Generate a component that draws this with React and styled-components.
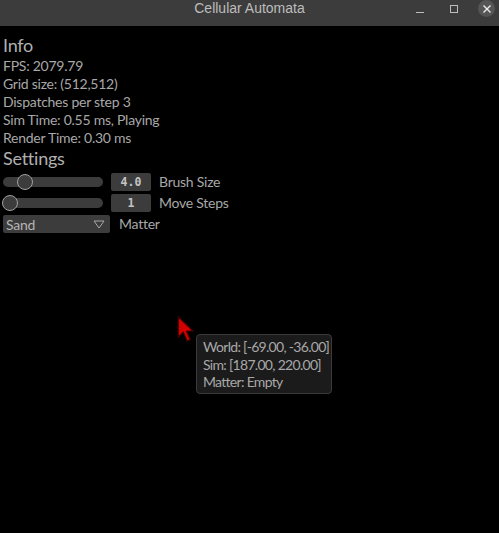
import React from "react";
import styled, { createGlobalStyle } from "styled-components";

const Global = createGlobalStyle`
  html, body { margin: 0; padding: 0; background: #000; }
  body { width: 499px; height: 533px; overflow: hidden; }
  #root { width: 499px; height: 533px; }
`;

const Window = styled.div`
  position: relative;
  width: 499px;
  height: 533px;
  background: #000;
  display: flex;
  flex-direction: column;
  overflow: hidden;
`;

const TitleBar = styled.div`
  height: 26px;
  flex: 0 0 26px;
  background: #3c3c3c;
  display: grid;
  grid-template-columns: 1fr auto 1fr;
  align-items: start;
`;

const Title = styled.div`
  grid-column: 2;
  font-family: "Liberation Sans", Arial, sans-serif;
  font-size: 14px;
  line-height: 16px;
  color: #bdbdbd;
`;

const Controls = styled.div`
  grid-column: 3;
  justify-self: end;
  display: flex;
  align-items: center;
  height: 17px;
  padding-right: 4px;
`;

const CtrlButton = styled.div`
  width: 17px;
  height: 17px;
  margin-left: ${(p) => p.$ml || 0}px;
  display: flex;
  align-items: center;
  justify-content: center;
  border-radius: 50%;
  background: ${(p) => (p.$active ? "#555555" : "transparent")};
`;

const Content = styled.div`
  flex: 1;
  display: flex;
  flex-direction: column;
  align-items: flex-start;
  padding: 8px 3px 0;
  font-family: Lato, "Noto Sans", sans-serif;
  letter-spacing: -0.25px;
  color: #a8a8a8;
`;

const Heading = styled.div`
  font-size: 18px;
  line-height: 23px;
  color: #b0b0b0;
  margin-bottom: ${(p) => p.$mb || 0}px;
`;

const Line = styled.div`
  font-size: 14px;
  line-height: 18px;
  white-space: nowrap;
`;

const Row = styled.div`
  display: flex;
  align-items: center;
  height: 18px;
  margin-bottom: 3px;
`;

const Track = styled.div`
  position: relative;
  width: 100px;
  height: 10px;
  border-radius: 5px;
  background: #3c3c3c;
`;

const Handle = styled.div`
  position: absolute;
  top: 50%;
  width: 14px;
  height: 14px;
  margin-top: -8px;
  margin-left: -8px;
  border-radius: 50%;
  background: #3c3c3c;
  border: 1px solid #a0a0a0;
`;

const ValueBox = styled.div`
  width: 40px;
  height: 18px;
  margin-left: 8px;
  border-radius: 2px;
  background: #3c3c3c;
  display: flex;
  align-items: center;
  justify-content: center;
  font-family: "DejaVu Sans Mono", monospace;
  font-weight: bold;
  font-size: 11.5px;
  letter-spacing: 0;
  color: #c4c4c4;
`;

const RowLabel = styled.span`
  margin-left: ${(p) => p.$ml || 8}px;
  font-size: 14px;
  line-height: 18px;
  white-space: nowrap;
`;

const Combo = styled.div`
  width: 107px;
  height: 18px;
  box-sizing: border-box;
  padding: 0 5px 0 3px;
  border-radius: 2px;
  background: #3c3c3c;
  display: flex;
  align-items: center;
  justify-content: space-between;
  font-size: 14px;
  color: #b4b4b4;
`;

const Tooltip = styled.div`
  position: absolute;
  left: 196px;
  top: 334px;
  width: 136px;
  height: 60px;
  box-sizing: border-box;
  padding: 3px 0 0 6px;
  background: #1b1b1b;
  border: 1px solid #3a3a3a;
  border-radius: 4px;
  box-shadow: 0 4px 10px rgba(0, 0, 0, 0.5);
  font-family: Lato, "Noto Sans", sans-serif;
  letter-spacing: -0.7px;
  font-size: 14px;
  line-height: 17.5px;
  white-space: nowrap;
  color: #a8a8a8;
`;

const Cursor = styled.svg`
  position: absolute;
  left: 176px;
  top: 315px;
`;

function Slider({ pos }) {
  return (
    <Track>
      <Handle style={{ left: pos }} />
    </Track>
  );
}

export default function App() {
  return (
    <>
      <Global />
      <Window>
        <TitleBar>
          <Title>Cellular Automata</Title>
          <Controls>
            <CtrlButton>
              <svg width="10" height="10" viewBox="0 0 10 10">
                <line x1="1" y1="8.5" x2="9" y2="8.5" stroke="#bdbdbd" strokeWidth="1" />
              </svg>
            </CtrlButton>
            <CtrlButton $ml={17}>
              <svg width="10" height="10" viewBox="0 0 10 10">
                <rect x="1.5" y="1.5" width="7" height="7" fill="none" stroke="#bdbdbd" strokeWidth="1" />
              </svg>
            </CtrlButton>
            <CtrlButton $ml={16} $active>
              <svg width="10" height="10" viewBox="0 0 10 10">
                <path d="M1.5 1.5 L8.5 8.5 M8.5 1.5 L1.5 8.5" stroke="#ececec" strokeWidth="1.4" />
              </svg>
            </CtrlButton>
          </Controls>
        </TitleBar>
        <Content>
          <Heading>Info</Heading>
          <Line>FPS: 2079.79</Line>
          <Line>Grid size: (512,512)</Line>
          <Line>Dispatches per step 3</Line>
          <Line>Sim Time: 0.55 ms, Playing</Line>
          <Line>Render Time: 0.30 ms</Line>
          <Heading $mb={3}>Settings</Heading>
          <Row>
            <Slider pos={22} />
            <ValueBox>4.0</ValueBox>
            <RowLabel>Brush Size</RowLabel>
          </Row>
          <Row>
            <Slider pos={7} />
            <ValueBox>1</ValueBox>
            <RowLabel>Move Steps</RowLabel>
          </Row>
          <Row>
            <Combo>
              <span>Sand</span>
              <svg width="12" height="9" viewBox="0 0 12 9">
                <path d="M1 1 L11 1 L6 8 Z" fill="none" stroke="#a8a8a8" strokeWidth="1" />
              </svg>
            </Combo>
            <RowLabel $ml={9}>Matter</RowLabel>
          </Row>
        </Content>
        <Cursor width="20" height="30" viewBox="0 0 17 27">
          <path
            d="M1.5 1.5 L1.5 20 L6 15.5 L9.5 23.5 L12.5 22.2 L9 14.5 L15 14.5 Z"
            fill="#d40000"
            stroke="#3a0000"
            strokeWidth="1.2"
            strokeLinejoin="round"
          />
        </Cursor>
        <Tooltip>
          <div>World: [-69.00, -36.00]</div>
          <div>Sim: [187.00, 220.00]</div>
          <div>Matter: Empty</div>
        </Tooltip>
      </Window>
    </>
  );
}
